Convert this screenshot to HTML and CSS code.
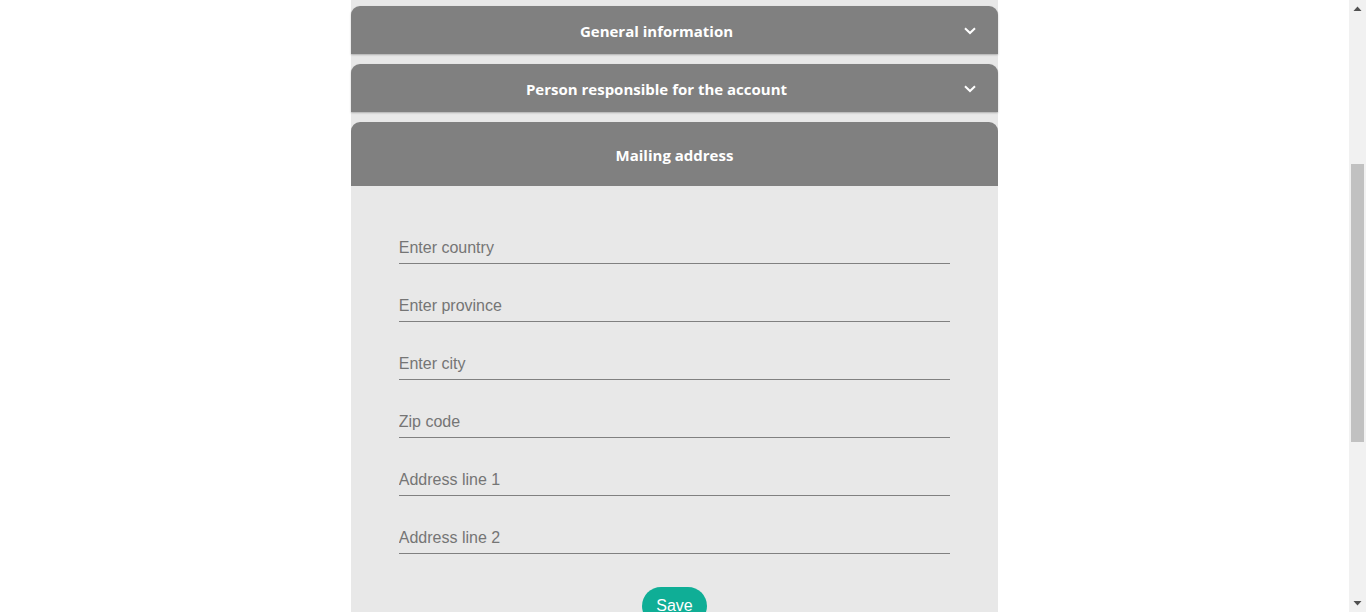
FILE: index.html
```html
<!DOCTYPE html>
<html lang="en">
<head>
<meta charset="utf-8">
<title>Account settings</title>
<link rel="stylesheet" href="styles.css">
</head>
<body>
<div class="viewport" id="viewport">
  <main class="panel">
    <section class="section">
      <button class="section-head" type="button">
        <span class="section-title">General information</span>
        <span class="chevron"><svg width="12" height="8" viewBox="0 0 12 8"><path d="M1 1.2 L6 6 L11 1.2" fill="none" stroke="#fff" stroke-width="2"/></svg></span>
      </button>
    </section>
    <section class="section">
      <button class="section-head" type="button">
        <span class="section-title">Person responsible for the account</span>
        <span class="chevron"><svg width="12" height="8" viewBox="0 0 12 8"><path d="M1 1.2 L6 6 L11 1.2" fill="none" stroke="#fff" stroke-width="2"/></svg></span>
      </button>
    </section>
    <section class="section open">
      <div class="section-head big">
        <span class="section-title">Mailing address</span>
      </div>
      <form class="section-body">
        <input class="field" type="text" placeholder="Enter country">
        <input class="field" type="text" placeholder="Enter province">
        <input class="field" type="text" placeholder="Enter city">
        <input class="field" type="text" placeholder="Zip code">
        <input class="field" type="text" placeholder="Address line 1">
        <input class="field" type="text" placeholder="Address line 2">
        <div class="actions"><button class="save" type="button">Save</button></div>
      </form>
    </section>
  </main>
</div>
<div class="scrollbar" aria-hidden="true">
  <div class="sb-btn"><svg width="9" height="5" viewBox="0 0 9 5"><path d="M0.5 5 L4.5 0.5 L8.5 5 Z" fill="#505050"/></svg></div>
  <div class="sb-track"><div class="sb-thumb"></div></div>
  <div class="sb-btn"><svg width="9" height="5" viewBox="0 0 9 5"><path d="M0.5 0 L4.5 4.5 L8.5 0 Z" fill="#505050"/></svg></div>
</div>
<script src="script.js"></script>
</body>
</html>
```
FILE: styles.css
```css
html, body {
  margin: 0;
  padding: 0;
  background: #fff;
  height: 100%;
}
body {
  display: flex;
  overflow: hidden;
  font-family: "Liberation Sans", Arial, sans-serif;
}
.viewport {
  flex: 1;
  height: 100%;
  overflow-y: auto;
  scrollbar-width: none;
}
.viewport::-webkit-scrollbar {
  display: none;
}
.panel {
  width: 48%;
  margin: 0 auto;
  background: #e8e8e8;
  padding: 329px 0 330px;
  display: flex;
  flex-direction: column;
  gap: 10px;
}
.section-head {
  box-sizing: border-box;
  display: flex;
  align-items: center;
  width: 100%;
  height: 48px;
  margin: 0;
  padding: 1px 0 0;
  border: 0;
  background: #808080;
  border-radius: 9px 9px 0 0;
  box-shadow: 0 1px 2px rgba(0,0,0,0.25);
  color: #fff;
  font-family: "Open Sans", sans-serif;
  font-weight: 700;
  font-size: 15px;
  cursor: pointer;
}
.section-title {
  flex: 1;
  text-align: center;
}
.chevron {
  width: 36px;
  display: flex;
  justify-content: flex-start;
  align-items: center;
  padding-left: 2px;
  box-sizing: border-box;
}
.section-head.big {
  height: 64px;
  box-shadow: none;
  cursor: default;
}
.section-body {
  margin: 0;
  padding: 47px 48px 0;
  display: flex;
  flex-direction: column;
  gap: 27px;
}
.field {
  display: block;
  width: 100%;
  box-sizing: border-box;
  height: 31px;
  margin: 0;
  padding: 0;
  border: 0;
  border-bottom: 1px solid #808080;
  background: transparent;
  font-family: "Liberation Sans", Arial, sans-serif;
  font-size: 16px;
  color: #333;
  outline: none;
}
.field::placeholder {
  color: #757575;
}
.actions {
  display: flex;
  justify-content: center;
  padding-top: 6px;
}
.save {
  background: #0fae96;
  color: #fff;
  border: 0;
  border-radius: 20px;
  padding: 10px 14px;
  font-family: "Liberation Sans", Arial, sans-serif;
  font-size: 16px;
  line-height: 18px;
  cursor: pointer;
}
.scrollbar {
  width: 17px;
  flex: none;
  height: 100%;
  background: #f1f1f1;
  display: flex;
  flex-direction: column;
}
.sb-btn {
  height: 17px;
  display: flex;
  align-items: center;
  justify-content: center;
}
.sb-track {
  flex: 1;
  padding: 147px 2px 0;
}
.sb-thumb {
  height: 278px;
  background: #c1c1c1;
}
```
FILE: script.js
```js
document.getElementById('viewport').scrollTop = 323;
```
